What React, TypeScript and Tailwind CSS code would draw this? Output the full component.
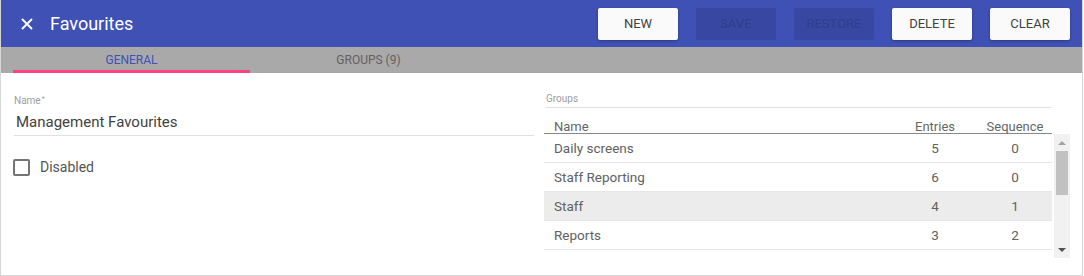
import { X } from 'lucide-react';

const buttons = [
  { label: 'NEW', disabled: false },
  { label: 'SAVE', disabled: true },
  { label: 'RESTORE', disabled: true },
  { label: 'DELETE', disabled: false },
  { label: 'CLEAR', disabled: false },
];

const groups = [
  { name: 'Daily screens', entries: 5, seq: 0 },
  { name: 'Staff Reporting', entries: 6, seq: 0 },
  { name: 'Staff', entries: 4, seq: 1, selected: true },
  { name: 'Reports', entries: 3, seq: 2 },
  { name: 'Reports 2', entries: 8, seq: 3 },
];

export default function App() {
  return (
    <div
      className="w-[1083px] h-[276px] bg-white border-l border-r border-b border-[#d6d6d6] flex flex-col overflow-hidden"
      style={{ fontFamily: 'Roboto, "Liberation Sans", sans-serif' }}
    >
      {/* Header */}
      <div className="h-[47px] bg-[#3f51b5] flex items-center shrink-0">
        <X className="w-[18px] h-[18px] text-white ml-[17px]" strokeWidth={2.5} />
        <span className="ml-[14px] text-white text-[18px] leading-none">Favourites</span>
        <div className="ml-auto mr-[12px] flex gap-[18px]">
          {buttons.map(({ label, disabled }) => (
            <button
              key={label}
              className={
                disabled
                  ? 'w-[80px] h-[32px] rounded-[2px] bg-[#3848a2] text-[#2f3d8c] text-[13px] font-normal'
                  : 'w-[80px] h-[32px] rounded-[2px] bg-[#fafafa] text-[#424242] text-[13px] font-normal shadow-[0_1px_3px_rgba(0,0,0,0.3)]'
              }
            >
              {label}
            </button>
          ))}
        </div>
      </div>

      {/* Tabs */}
      <div className="h-[26px] bg-[#a9a9a9] flex pl-[12px] shrink-0">
        <div className="w-[237px] flex items-center justify-center text-[12px] text-[#3f51b5] border-b-[3px] border-[#ff4081] pt-[2px]">
          GENERAL
        </div>
        <div className="w-[237px] flex items-center justify-center text-[12px] text-[#616161] pb-[1px]">
          GROUPS (9)
        </div>
      </div>

      {/* Content */}
      <div className="flex flex-1 min-h-0">
        {/* Left form */}
        <div className="w-[536px] pl-[13px] pt-[23px]">
          <div className="text-[10px] text-[#9e9e9e] leading-none">
            Name<sup className="text-[7px] ml-[1px]">*</sup>
          </div>
          <div className="border-b border-[#e0e0e0] text-[15px] text-[#424242] pt-[7px] pb-[4px] pl-[2px] leading-[18px]">
            Management Favourites
          </div>
          <label className="flex items-center mt-[21px] -ml-[1px]">
            <span className="w-[17px] h-[17px] border-2 border-[#757575] rounded-[2px]" />
            <span className="ml-[10px] text-[14px] text-[#555]">Disabled</span>
          </label>
        </div>

        {/* Right groups */}
        <div className="flex-1 pl-[10px] pt-[20px] pr-[12px] flex flex-col min-h-0">
          <div className="w-[505px] border-b border-[#e0e0e0] text-[10px] text-[#9e9e9e] pb-[2px] ml-[2px] leading-[12px]">
            Groups
          </div>
          <div className="flex mt-[12px] w-[508px] border-b border-[#888] text-[13px] text-[#666] leading-[13px]">
            <div className="flex-1 pl-[10px]">Name</div>
            <div className="w-[86px] text-center">Entries</div>
            <div className="w-[74px] text-center">Sequence</div>
          </div>
          <div className="flex min-h-0 h-[124px] overflow-hidden">
            <div className="w-[508px]">
              {groups.map((g) => (
                <div
                  key={g.name}
                  className={
                    'flex h-[29px] items-center border-b border-[#e6e6e6] text-[13.5px] text-[#616161] ' +
                    (g.selected ? 'bg-[#ececec]' : '')
                  }
                >
                  <div className="flex-1 pl-[10px]">{g.name}</div>
                  <div className="w-[86px] text-center">{g.entries}</div>
                  <div className="w-[74px] text-center">{g.seq}</div>
                </div>
              ))}
            </div>
            <div className="w-[16px] ml-[2px] bg-[#f1f1f1] flex flex-col items-center">
              <div className="h-[17px] flex items-center">
                <div className="w-0 h-0 border-l-[4px] border-r-[4px] border-b-[4px] border-l-transparent border-r-transparent border-b-[#a3a3a3]" />
              </div>
              <div className="w-[12px] h-[44px] bg-[#c1c1c1]" />
              <div className="flex-1" />
              <div className="h-[17px] flex items-center">
                <div className="w-0 h-0 border-l-[4px] border-r-[4px] border-t-[4px] border-l-transparent border-r-transparent border-t-[#505050]" />
              </div>
            </div>
          </div>
        </div>
      </div>
    </div>
  );
}
